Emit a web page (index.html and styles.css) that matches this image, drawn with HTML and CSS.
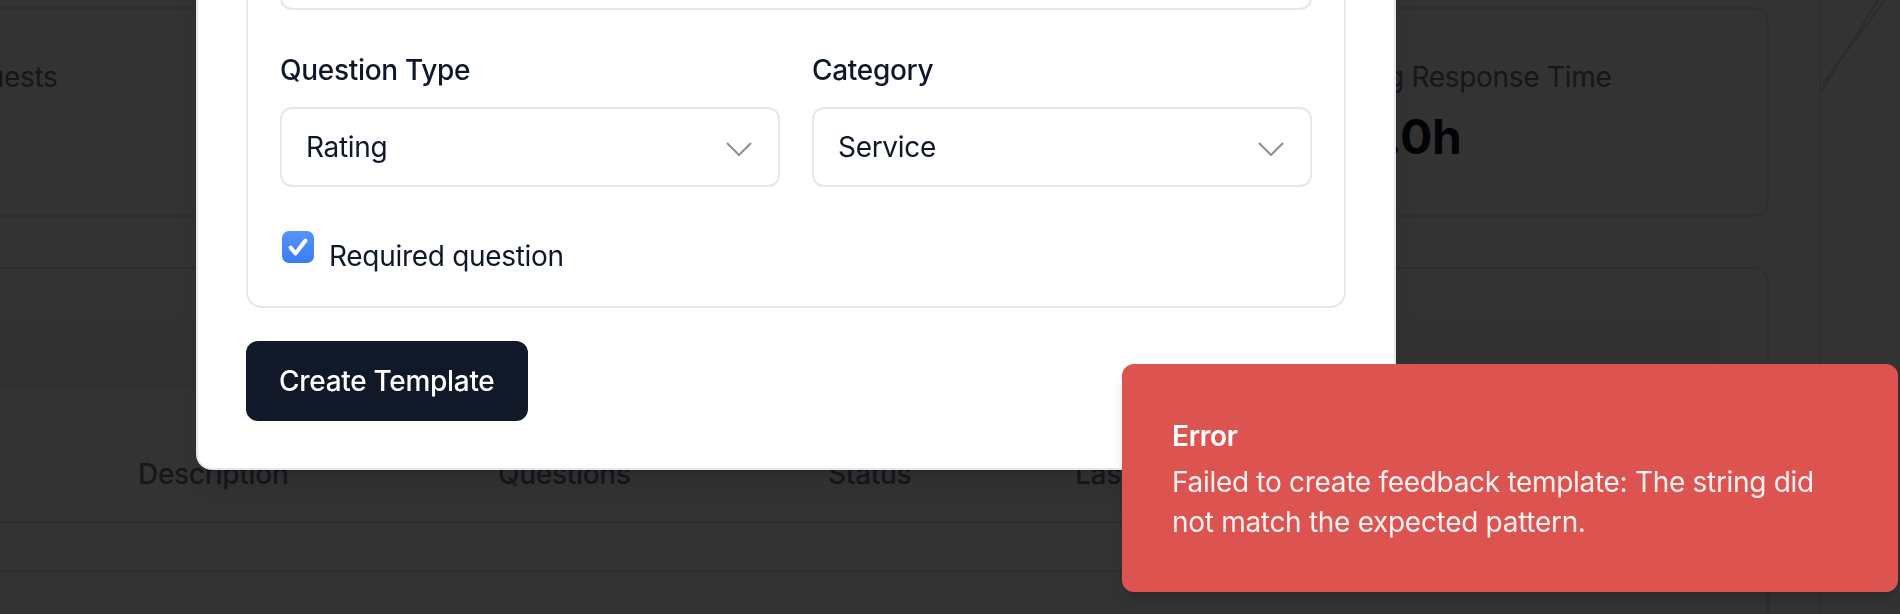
FILE: index.html
```html
<!DOCTYPE html>
<html lang="en">
<head>
<meta charset="utf-8">
<title>Feedback Templates</title>
<link rel="stylesheet" href="styles.css">
</head>
<body>
<div class="app">
  <main class="main">
    <section class="stats">
      <div class="stat-card">
        <div class="stat-label">Total Requests</div>
        <div class="stat-value">0</div>
      </div>
      <div class="stat-card">
        <div class="stat-label">Completed</div>
        <div class="stat-value">0</div>
      </div>
      <div class="stat-card">
        <div class="stat-label">Response Rate</div>
        <div class="stat-value">0%</div>
      </div>
      <div class="stat-card">
        <div class="stat-label">Avg Response Time</div>
        <div class="stat-value">0.0h</div>
      </div>
    </section>
    <section class="table-card">
      <div class="toolbar"></div>
      <div class="thead">
        <div class="th">Name</div>
        <div class="th">Description</div>
        <div class="th">Questions</div>
        <div class="th">Status</div>
        <div class="th">Last Updated</div>
        <div class="th">Actions</div>
      </div>
      <div class="trow"></div>
    </section>
  </main>
  <aside class="aside">
    <svg class="aside-deco" width="81" height="100" viewBox="0 0 81 100">
      <line x1="1" y1="90" x2="57" y2="0" />
      <line x1="1" y1="84" x2="64" y2="0" />
    </svg>
  </aside>
</div>

<div class="overlay"></div>

<div class="dialog">
  <div class="dialog-header">
    <h2 class="dialog-title">Create Feedback Template</h2>
    <p class="dialog-desc">Design a feedback form to send to your clients.</p>
  </div>
  <div class="field">
    <label class="label">Template Name</label>
    <div class="input">Client Satisfaction Survey</div>
  </div>
  <div class="q-card">
    <div class="field">
      <label class="label">Question</label>
      <div class="input">How satisfied are you with our service?</div>
    </div>
    <div class="grid2">
      <div class="field">
        <label class="label">Question Type</label>
        <div class="select">
          <span>Rating</span>
          <svg class="chev" width="26" height="14" viewBox="0 0 26 14"><polyline points="1,1 13,13 25,1" /></svg>
        </div>
      </div>
      <div class="field">
        <label class="label">Category</label>
        <div class="select">
          <span>Service</span>
          <svg class="chev" width="26" height="14" viewBox="0 0 26 14"><polyline points="1,1 13,13 25,1" /></svg>
        </div>
      </div>
    </div>
    <label class="check-row">
      <span class="checkbox">
        <svg width="32" height="32" viewBox="0 0 32 32"><path d="M8.5 16.5 L13.5 22.5 L23.5 9.5" /></svg>
      </span>
      <span class="check-text">Required question</span>
    </label>
  </div>
  <button class="btn-primary">Create Template</button>
</div>

<div class="toast">
  <div class="toast-title">Error</div>
  <div class="toast-desc">Failed to create feedback template: The string did not match the expected pattern.</div>
</div>
</body>
</html>
```

FILE: styles.css
```css
* {
  box-sizing: border-box;
}

html, body {
  margin: 0;
  padding: 0;
}

body {
  width: 1900px;
  height: 614px;
  overflow: hidden;
  background: #ffffff;
  font-family: Inter, "Noto Sans", "Liberation Sans", sans-serif;
  color: #0f172a;
  letter-spacing: -0.3px;
}

/* ---------- underlying page ---------- */
.app {
  display: flex;
  height: 614px;
}

.main {
  flex: none;
  width: 1952px;
  margin-left: -183px;
  padding-top: 7px;
}

.stats {
  display: grid;
  grid-template-columns: repeat(4, 464px);
  gap: 32px;
}

.stat-card {
  height: 210px;
  border: 2px solid #e5e7eb;
  border-radius: 16px;
  background: #ffffff;
  padding: 48px 48px 0;
}

.stat-label {
  font-size: 28px;
  line-height: 40px;
  color: #6b7280;
  margin-bottom: 8px;
}

.stat-value {
  font-size: 48px;
  line-height: 64px;
  font-weight: 700;
  color: #0f172a;
}

.table-card {
  margin-top: 50px;
  height: 420px;
  border: 2px solid #e5e7eb;
  border-radius: 16px;
  background: #ffffff;
  padding: 50px 48px 0;
}

.toolbar {
  height: 68px;
  border-radius: 12px;
  background: #f8fafc;
  border: 2px solid #eef0f3;
}

.thead {
  margin-top: 40px;
  display: grid;
  grid-template-columns: 239px 360px 330px 247px 357px 1fr;
  height: 96px;
  border-bottom: 2px solid #e5e7eb;
}

.th {
  padding-left: 32px;
  font-size: 28px;
  line-height: 94px;
  font-weight: 500;
  color: #6b7280;
  white-space: nowrap;
}

.trow {
  height: 49px;
  border-bottom: 2px solid #e5e7eb;
}

.aside {
  flex: none;
  width: 81px;
  margin-left: 50px;
  border-left: 2px solid #e5e7eb;
  height: 614px;
}

.aside-deco {
  display: block;
}

.aside-deco line {
  stroke: #d4d4d8;
  stroke-width: 2;
}

/* ---------- overlay ---------- */
.overlay {
  position: fixed;
  inset: 0;
  background: rgba(0, 0, 0, 0.8);
}

/* ---------- dialog ---------- */
.dialog {
  position: fixed;
  left: 196px;
  bottom: 144px;
  width: 1200px;
  background: #ffffff;
  border: 2px solid #e2e8f0;
  border-radius: 16px;
  padding: 48px 48px 47px;
  box-shadow: 0 20px 25px -5px rgba(0, 0, 0, 0.1), 0 8px 10px -6px rgba(0, 0, 0, 0.1);
  display: flex;
  flex-direction: column;
}

.dialog-header {
  margin-bottom: 32px;
}

.dialog-title {
  margin: 0 0 12px;
  font-size: 36px;
  line-height: 48px;
  font-weight: 600;
}

.dialog-desc {
  margin: 0;
  font-size: 28px;
  line-height: 40px;
  color: #64748b;
}

.field {
  display: flex;
  flex-direction: column;
}

.dialog > .field {
  margin-bottom: 32px;
}

.label {
  font-size: 28px;
  line-height: 40px;
  font-weight: 500;
  color: #0f172a;
  margin-bottom: 17px;
}

.input,
.select {
  height: 80px;
  border: 2px solid #e2e8f0;
  border-radius: 12px;
  background: #ffffff;
  padding: 0 26px 0 24px;
  font-size: 28px;
  color: #0f172a;
  display: flex;
  align-items: center;
}

.select {
  justify-content: space-between;
}

.chev {
  display: block;
  margin-top: 3px;
}

.chev polyline {
  fill: none;
  stroke: #8e8e93;
  stroke-width: 2;
}

.q-card {
  border: 2px solid #e2e8f0;
  border-radius: 16px;
  padding: 32px;
  display: flex;
  flex-direction: column;
}

.grid2 {
  margin-top: 40px;
  display: grid;
  grid-template-columns: 1fr 1fr;
  gap: 32px;
}

.check-row {
  margin-top: 44px;
  height: 43px;
  display: flex;
  align-items: flex-start;
}

.checkbox {
  flex: none;
  width: 32px;
  height: 32px;
  margin-left: 2px;
  border-radius: 7px;
  background: linear-gradient(#5694f8, #3a7cf5);
  display: block;
}

.checkbox svg {
  display: block;
}

.checkbox path {
  fill: none;
  stroke: #ffffff;
  stroke-width: 4;
  stroke-linecap: round;
  stroke-linejoin: round;
}

.check-text {
  margin-left: 15px;
  margin-top: 5px;
  font-size: 28px;
  line-height: 40px;
  color: #0f172a;
}

.btn-primary {
  align-self: flex-start;
  margin-top: 33px;
  height: 80px;
  padding: 0 33px;
  border: none;
  border-radius: 12px;
  background: #111827;
  color: #ffffff;
  font-family: inherit;
  letter-spacing: -0.3px;
  font-size: 28px;
  font-weight: 500;
}

/* ---------- toast ---------- */
.toast {
  position: fixed;
  right: 2px;
  bottom: 22px;
  width: 776px;
  background: #dd534f;
  border: 2px solid #dd534f;
  border-radius: 12px;
  padding: 50px 64px 48px 48px;
  color: #ffffff;
  box-shadow: 0 10px 15px -3px rgba(0, 0, 0, 0.15), 0 4px 6px -4px rgba(0, 0, 0, 0.15);
}

.toast-title {
  font-size: 28px;
  line-height: 40px;
  font-weight: 600;
}

.toast-desc {
  margin-top: 6px;
  font-size: 28px;
  line-height: 40px;
  opacity: 0.92;
}
```
